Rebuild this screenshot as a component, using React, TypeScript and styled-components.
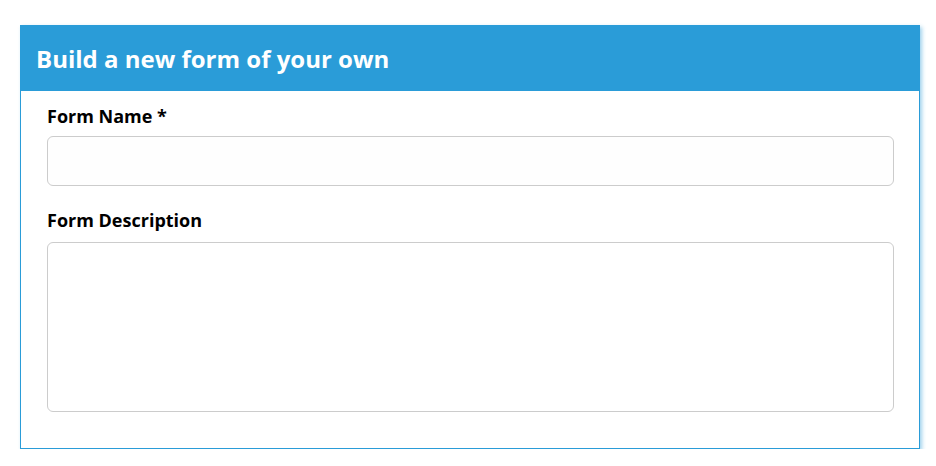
import styled, { createGlobalStyle } from 'styled-components';

const GlobalStyle = createGlobalStyle`
  body {
    margin: 0;
    background: #ffffff;
    font-family: 'Open Sans', 'Noto Sans', sans-serif;
  }
`;

const Page = styled.div`
  padding: 25px 0 0 20px;
`;

const Panel = styled.div`
  width: 900px;
  box-sizing: border-box;
  border: 1px solid #2a9cd8;
  background: #ffffff;
  box-shadow: 2px 2px 4px rgba(42, 156, 216, 0.45);
`;

const PanelHeader = styled.div`
  background: #2a9cd8;
  height: 66px;
  display: flex;
  align-items: center;
  padding: 0 16px;
  margin: -1px -1px 0 -1px;
`;

const Title = styled.h2`
  margin: 0;
  color: #ffffff;
  font-size: 24px;
  font-weight: 700;
`;

const FormBody = styled.form`
  display: flex;
  flex-direction: column;
  padding: 13px 25px 36px 26px;
`;

const Field = styled.div<{ $gap: number }>`
  display: flex;
  flex-direction: column;
  gap: ${(p) => p.$gap}px;
  margin-bottom: 22px;

  &:last-child {
    margin-bottom: 0;
  }
`;

const Label = styled.label`
  font-size: 18px;
  font-weight: 700;
  color: #000000;
  line-height: 24px;
`;

const TextInput = styled.input`
  height: 50px;
  box-sizing: border-box;
  border: 1px solid #cccccc;
  border-radius: 6px;
  background: #fefefe;
  padding: 6px 12px;
  font-family: inherit;
  font-size: 16px;
`;

const TextArea = styled.textarea`
  height: 170px;
  box-sizing: border-box;
  border: 1px solid #cccccc;
  border-radius: 6px;
  background: #ffffff;
  padding: 6px 12px;
  font-family: inherit;
  font-size: 16px;
  resize: none;
`;

const App = () => (
  <>
    <GlobalStyle />
    <Page>
      <Panel>
        <PanelHeader>
          <Title>Build a new form of your own</Title>
        </PanelHeader>
        <FormBody>
          <Field $gap={8}>
            <Label htmlFor="form-name">Form Name *</Label>
            <TextInput id="form-name" />
          </Field>
          <Field $gap={10}>
            <Label htmlFor="form-desc">Form Description</Label>
            <TextArea id="form-desc" />
          </Field>
        </FormBody>
      </Panel>
    </Page>
  </>
);

export default App;
